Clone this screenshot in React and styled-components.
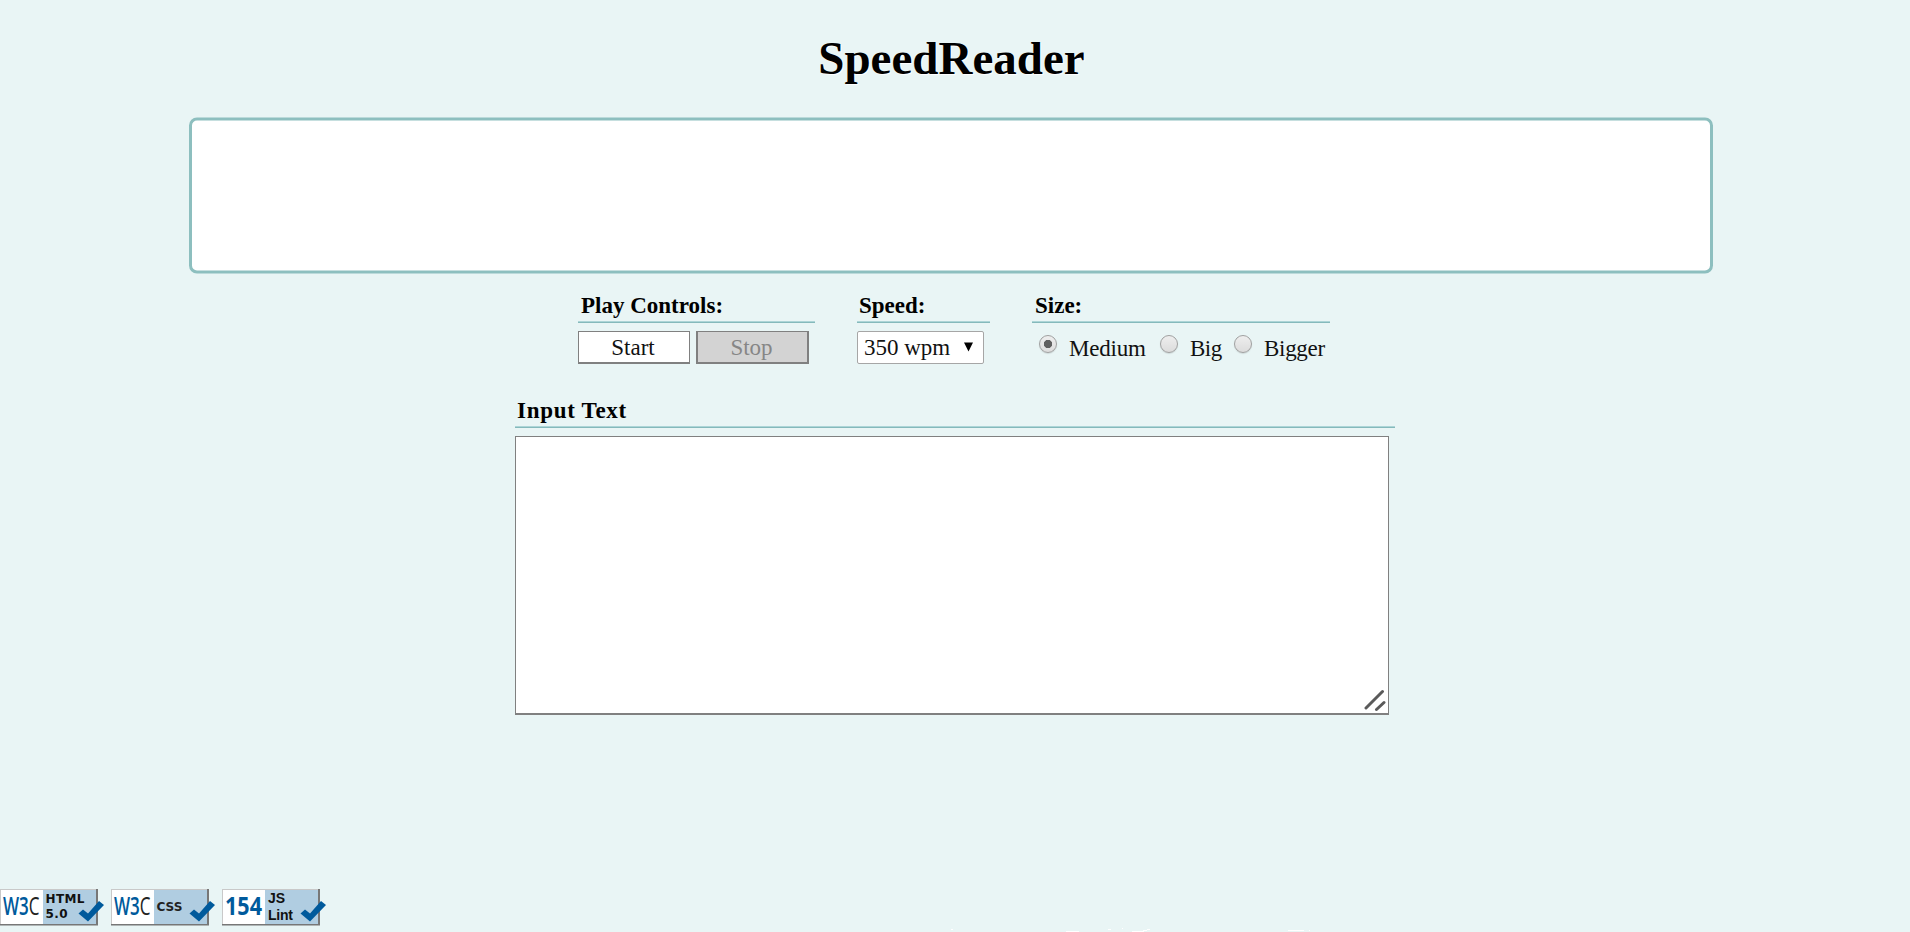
import React from 'react';
import styled, { createGlobalStyle } from 'styled-components';

const Global = createGlobalStyle`
  * { box-sizing: border-box; }
  html, body { margin: 0; height: 100%; background: #e9f5f5; overflow: hidden; }
  body, button, select, textarea {
    font-family: "Baskerville Old Face", "Liberation Serif", serif;
    font-size: 23px;
    color: #111;
  }
`;

const Page = styled.main`
  height: 932px;
  width: 1910px;
  position: relative;
  display: flex;
  flex-direction: column;
  overflow: hidden;
`;
const Title = styled.h1`
  margin: 32px 0 0 -7px;
  height: 85px;
  line-height: 53px;
  text-align: center;
  font-size: 47px;
  font-weight: bold;
  color: #000;
  text-shadow: 1px 1px 1px #fff;
`;
const Display = styled.section`
  width: 1524px;
  height: 156px;
  margin-left: 189px;
  background: #fff;
  border: 3px solid #8dbfbf;
  border-radius: 8px;
  transform: translateY(0.5px);
`;
const Controls = styled.div`
  display: flex;
  gap: 42px;
  margin: 17px 0 0 578px;
  height: 105px;
`;
const Group = styled.fieldset`
  border: 0;
  margin: 0;
  padding: 0;
  width: ${(p) => p.$width}px;
`;
const Heading = styled.div`
  height: 33px;
  padding: 2px 0 0 ${(p) => p.$indent || 3}px;
  line-height: 28px;
  font-weight: bold;
  color: #000;
  letter-spacing: ${(p) => p.$spacing || 0}px;
  border-bottom: 1px solid #85b9bb;
  box-shadow: inset 0 -1px #add5d7;
`;
const Row = styled.div`
  display: flex;
  margin-top: 8px;
  gap: 6px;
`;
const Button = styled.button`
  width: ${(p) => (p.disabled ? 113 : 112)}px;
  height: 33px;
  padding: 2px 2px 0 0;
  line-height: 28px;
  background: ${(p) => (p.disabled ? '#d3d3d3' : '#fff')};
  color: ${(p) => (p.disabled ? '#868686' : '#111')};
  border: solid #808080;
  border-width: ${(p) => (p.disabled ? '1px 2px 2px' : '1px 1px 2px')};
`;
const Picker = styled.button`
  width: 127px;
  height: 33px;
  display: flex;
  align-items: center;
  justify-content: space-between;
  padding: 1px 10px 0 6px;
  background: #fff;
  border: 1px solid #a6a6a6;
  border-radius: 2px;
`;
const Arrow = styled.svg`
  width: 9px;
  height: 10px;
  margin-top: -3px;
`;
const Options = styled.div`
  display: flex;
  margin: 12px 0 0 7px;
`;
const Option = styled.label`
  display: flex;
  width: ${(p) => p.$width}px;
  white-space: nowrap;
  line-height: 27px;
  letter-spacing: ${(p) => p.$spacing || -0.2}px;
`;
const Radio = styled.span`
  flex: none;
  width: 18px;
  height: 18px;
  margin-right: 12px;
  border: 1px solid #a0a0a0;
  border-radius: 50%;
  background: ${(p) =>
    p.$on
      ? 'radial-gradient(circle, #606060 0 3.8px, transparent 4.5px), linear-gradient(#eee, #ddd)'
      : 'linear-gradient(#eee, #dcdcdc)'};
  box-shadow: 0 1px 1px #cfdada;
`;
const Input = styled.section`
  margin-left: 515px;
  width: 880px;
`;
const TextBox = styled.div`
  display: flex;
  align-items: flex-end;
  justify-content: flex-end;
  width: 874px;
  height: 279px;
  margin-top: 8px;
  background: #fff;
  border: 1px solid #808080;
  border-bottom-width: 2px;
`;
const Footer = styled.footer`
  display: flex;
  gap: 6px;
  margin-top: 174px;
`;
const BadgeArt = styled.svg`
  width: 105px;
  height: 38px;
  display: block;
`;
const Edge = styled.svg`
  position: absolute;
  left: 940px;
  top: 926px;
  width: 380px;
  height: 6px;
`;

const Badge = ({ kind }) => (
  <BadgeArt viewBox="0 0 105 38">
    <rect x="0" y="0" width="98" height="36.5" fill="#777" />
    <rect x="0" y="0" width="96" height="35" fill="#c9c9c9" />
    <rect x="1" y="1" width="42" height="34" fill="#fff" />
    <rect x="43" y="1" width="53" height="34" fill="#b0cde1" />
    {kind === 'lint' ? (
      <text x="3" y="25.5" fontFamily="Open Sans" fontSize="25" fontWeight="700" fill="#005a9c" textLength="37" lengthAdjust="spacingAndGlyphs">154</text>
    ) : (
      <text x="3" y="26" fontFamily="Open Sans" fontSize="25" fontWeight="600" fill="#005a9c" textLength="36.5" lengthAdjust="spacingAndGlyphs">
        W3<tspan fill="#222" fontWeight="400">C</tspan>
      </text>
    )}
    {kind === 'html' && (
      <g fontFamily="DejaVu Sans" fontSize="12" fontWeight="bold" fill="#111">
        <text x="45.500" y="14" textLength="39">HTML</text>
        <text x="45.500" y="29" textLength="22">5.0</text>
      </g>
    )}
    {kind === 'css' && (
      <text x="45.500" y="22" fontFamily="DejaVu Sans" fontSize="13" fontWeight="bold" fill="#222" textLength="26" lengthAdjust="spacingAndGlyphs">CSS</text>
    )}
    {kind === 'lint' && (
      <g fontFamily="Liberation Sans" fontSize="14" fontWeight="bold" fill="#111">
        <text x="46" y="13.500">JS</text>
        <text x="46" y="30.500" textLength="25">Lint</text>
      </g>
    )}
    <path d="M78.500 24.500 L83 20.500 L88 24.500 L99 12 L104 16 L88 32.500 Z" fill="#005a9c" />
  </BadgeArt>
);

export default function App() {
  return (
    <>
      <Global />
      <Page>
        <Title>SpeedReader</Title>
        <Display />
        <Controls>
          <Group $width={237}>
            <Heading>Play Controls:</Heading>
            <Row>
              <Button>Start</Button>
              <Button disabled>Stop</Button>
            </Row>
          </Group>
          <Group $width={133}>
            <Heading $indent={2}>Speed:</Heading>
            <Row>
              <Picker>
                350 wpm
                <Arrow viewBox="0 0 9 10"><path d="M0 0.500H9L4.500 9.500Z" /></Arrow>
              </Picker>
            </Row>
          </Group>
          <Group $width={298}>
            <Heading>Size:</Heading>
            <Options>
              <Option $width={121}><Radio $on />Medium</Option>
              <Option $width={74} $spacing={-0.5}><Radio />Big</Option>
              <Option $width={90} $spacing={-0.3}><Radio />Bigger</Option>
            </Options>
          </Group>
        </Controls>
        <Input>
          <Heading $indent={2} $spacing={0.7}>Input Text</Heading>
          <TextBox role="textbox">
            <svg width="24" height="26" stroke="#5a5a5a" strokeWidth="3" strokeLinecap="round">
              <path d="M2 21L18.500 4.500M12.500 22.500L20 15.500" />
            </svg>
          </TextBox>
        </Input>
        <Footer>
          <Badge kind="html" />
          <Badge kind="css" />
          <Badge kind="lint" />
        </Footer>
        <Edge fill="#fff">
          <path d="M11 3h2v1h-2zM126 5h13v1h-13zM168 3h3v1h-3zM182 2h1v1h-1zM192 5h11v-1h4v-1h3v1h-3v1h-3v1h-12zM348 4h16v1h-16zM369 4h1v1h-1z" />
        </Edge>
      </Page>
    </>
  );
}
